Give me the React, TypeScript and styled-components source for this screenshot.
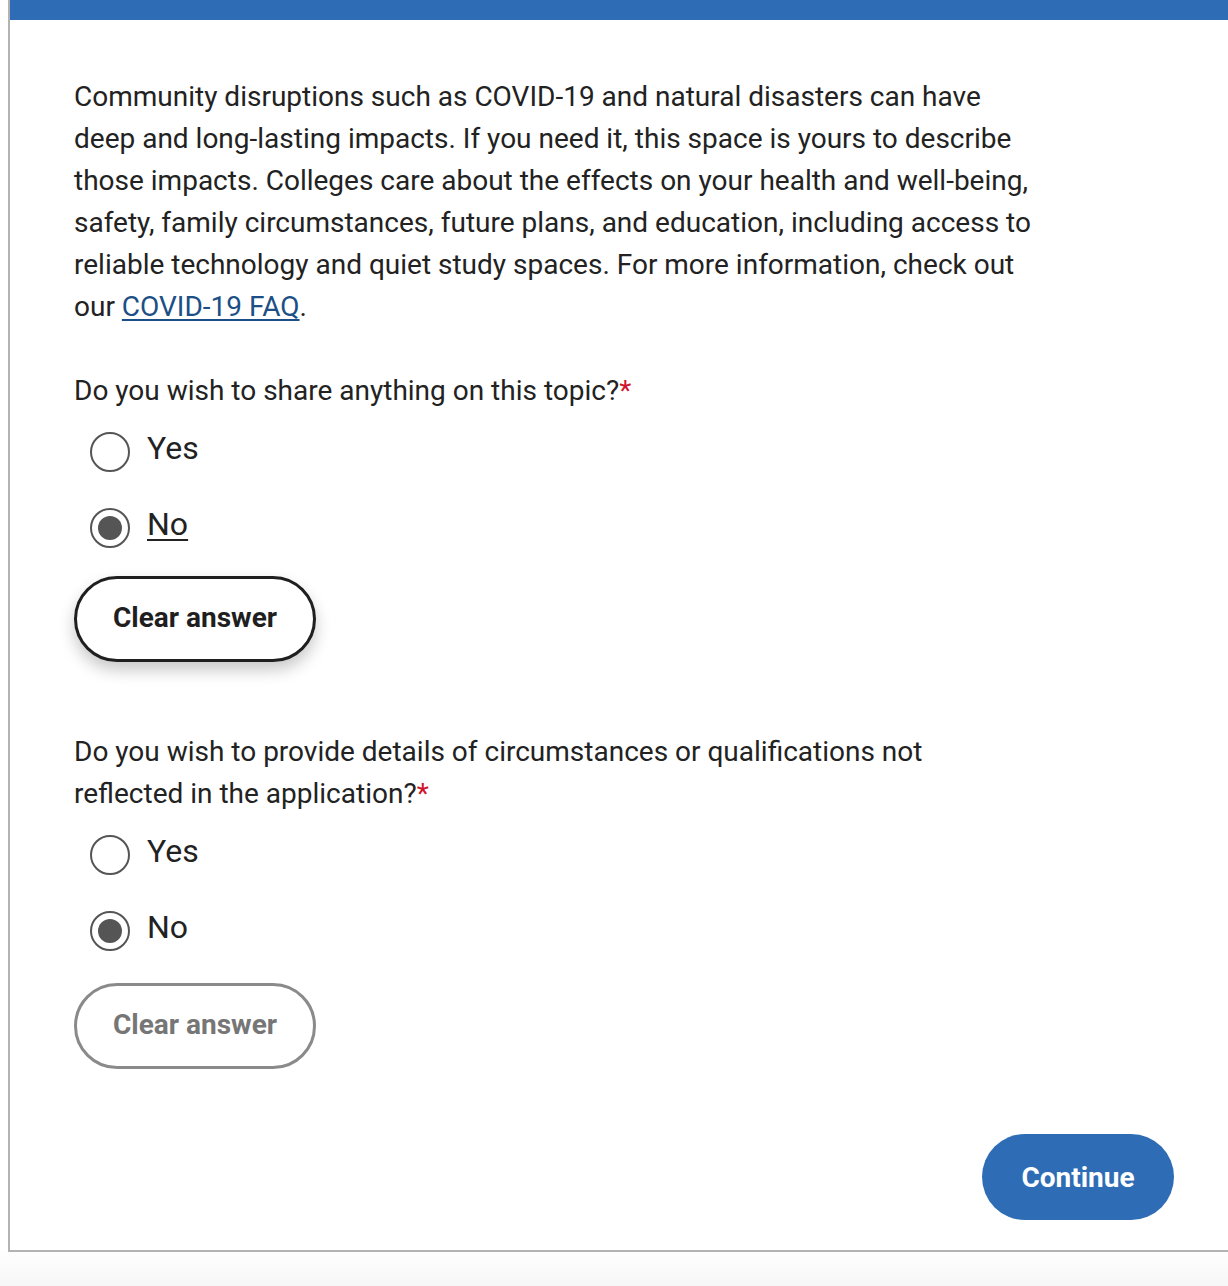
import React from "react";
import styled, { createGlobalStyle } from "styled-components";

const Global = createGlobalStyle`
  html, body { margin: 0; padding: 0; }
  body {
    background: linear-gradient(#ffffff 1250px, #f6f6f6 1286px);
    min-height: 1286px;
    font-family: Roboto, "Liberation Sans", sans-serif;
    color: #222;
  }
  #root { padding-left: 8px; }
`;

const Card = styled.div`
  background: #fff;
  border-left: 2px solid #b3b3b3;
  border-bottom: 2px solid #b3b3b3;
`;

const TopBar = styled.div`
  height: 20px;
  background: #2e6db5;
`;

const Body = styled.div`
  padding: 56px 54px 30px 64px;
  display: flex;
  flex-direction: column;
`;

const Paragraph = styled.p`
  margin: 0;
  font-size: 28px;
  line-height: 42px;
  color: #222;
`;

const Link = styled.a`
  color: #1b4f86;
  text-decoration: underline;
  text-underline-offset: 3px;
  text-decoration-thickness: 2px;
`;

const Question = styled.p<{ $top: number }>`
  margin: ${(p) => p.$top}px 0 0;
  font-size: 28px;
  line-height: 42px;
  color: #222;
`;

const Req = styled.span`
  color: #d0142c;
`;

const Options = styled.div`
  display: flex;
  flex-direction: column;
  gap: 36px;
  margin-top: 20px;
  padding-left: 16px;
`;

const OptionRow = styled.label`
  display: flex;
  align-items: center;
  gap: 17px;
  height: 40px;
  cursor: pointer;
`;

const RadioCircle = styled.span<{ $checked: boolean }>`
  width: 40px;
  height: 40px;
  box-sizing: border-box;
  border: 2px solid #555;
  border-radius: 50%;
  display: flex;
  align-items: center;
  justify-content: center;
  flex-shrink: 0;
  &::after {
    content: "";
    width: 24px;
    height: 24px;
    border-radius: 50%;
    background: ${(p) => (p.$checked ? "#555" : "transparent")};
  }
`;

const OptionText = styled.span<{ $underline?: boolean }>`
  font-size: 32px;
  line-height: 38px;
  margin-top: -8px;
  color: #222;
  text-decoration: ${(p) => (p.$underline ? "underline" : "none")};
  text-underline-offset: 4px;
  text-decoration-thickness: 2px;
`;

const ClearButton = styled.button<{ $disabled?: boolean; $top: number }>`
  align-self: flex-start;
  margin-top: ${(p) => p.$top}px;
  width: 242px;
  height: 86px;
  box-sizing: border-box;
  padding: 0 0 3px;
  border-radius: 43px;
  background: #fff;
  font-family: Roboto, "Liberation Sans", sans-serif;
  font-weight: 700;
  font-size: 28px;
  border: 3px solid ${(p) => (p.$disabled ? "#8a8a8a" : "#1f1f1f")};
  color: ${(p) => (p.$disabled ? "#767676" : "#1f1f1f")};
  box-shadow: ${(p) =>
    p.$disabled ? "none" : "0 8px 16px rgba(0, 0, 0, 0.22)"};
  cursor: pointer;
`;

const Footer = styled.div`
  display: flex;
  justify-content: flex-end;
  margin-top: 65px;
`;

const ContinueButton = styled.button`
  width: 192px;
  height: 86px;
  border: none;
  border-radius: 43px;
  background: #2e6db5;
  color: #fff;
  font-family: Roboto, "Liberation Sans", sans-serif;
  font-weight: 700;
  font-size: 28px;
  cursor: pointer;
`;

type Opt = { label: string; checked: boolean; underline?: boolean };

const RadioGroup: React.FC<{ options: Opt[] }> = ({ options }) => (
  <Options>
    {options.map((o) => (
      <OptionRow key={o.label}>
        <RadioCircle $checked={o.checked} />
        <OptionText $underline={o.underline}>{o.label}</OptionText>
      </OptionRow>
    ))}
  </Options>
);

export default function App() {
  return (
    <>
      <Global />
      <Card>
        <TopBar />
        <Body>
          <Paragraph>
            Community disruptions such as COVID-19 and natural disasters can have
            <br />
            deep and long-lasting impacts. If you need it, this space is yours to describe
            <br />
            those impacts. Colleges care about the effects on your health and well-being,
            <br />
            safety, family circumstances, future plans, and education, including access to
            <br />
            reliable technology and quiet study spaces. For more information, check out
            <br />
            our <Link href="#">COVID-19 FAQ</Link>.
          </Paragraph>
          <Question $top={42}>
            Do you wish to share anything on this topic?<Req>*</Req>
          </Question>
          <RadioGroup
            options={[
              { label: "Yes", checked: false },
              { label: "No", checked: true, underline: true },
            ]}
          />
          <ClearButton $top={28}>Clear answer</ClearButton>
          <Question $top={69}>
            Do you wish to provide details of circumstances or qualifications not
            <br />
            reflected in the application?<Req>*</Req>
          </Question>
          <RadioGroup
            options={[
              { label: "Yes", checked: false },
              { label: "No", checked: true },
            ]}
          />
          <ClearButton $disabled $top={32}>
            Clear answer
          </ClearButton>
          <Footer>
            <ContinueButton>Continue</ContinueButton>
          </Footer>
        </Body>
      </Card>
    </>
  );
}
